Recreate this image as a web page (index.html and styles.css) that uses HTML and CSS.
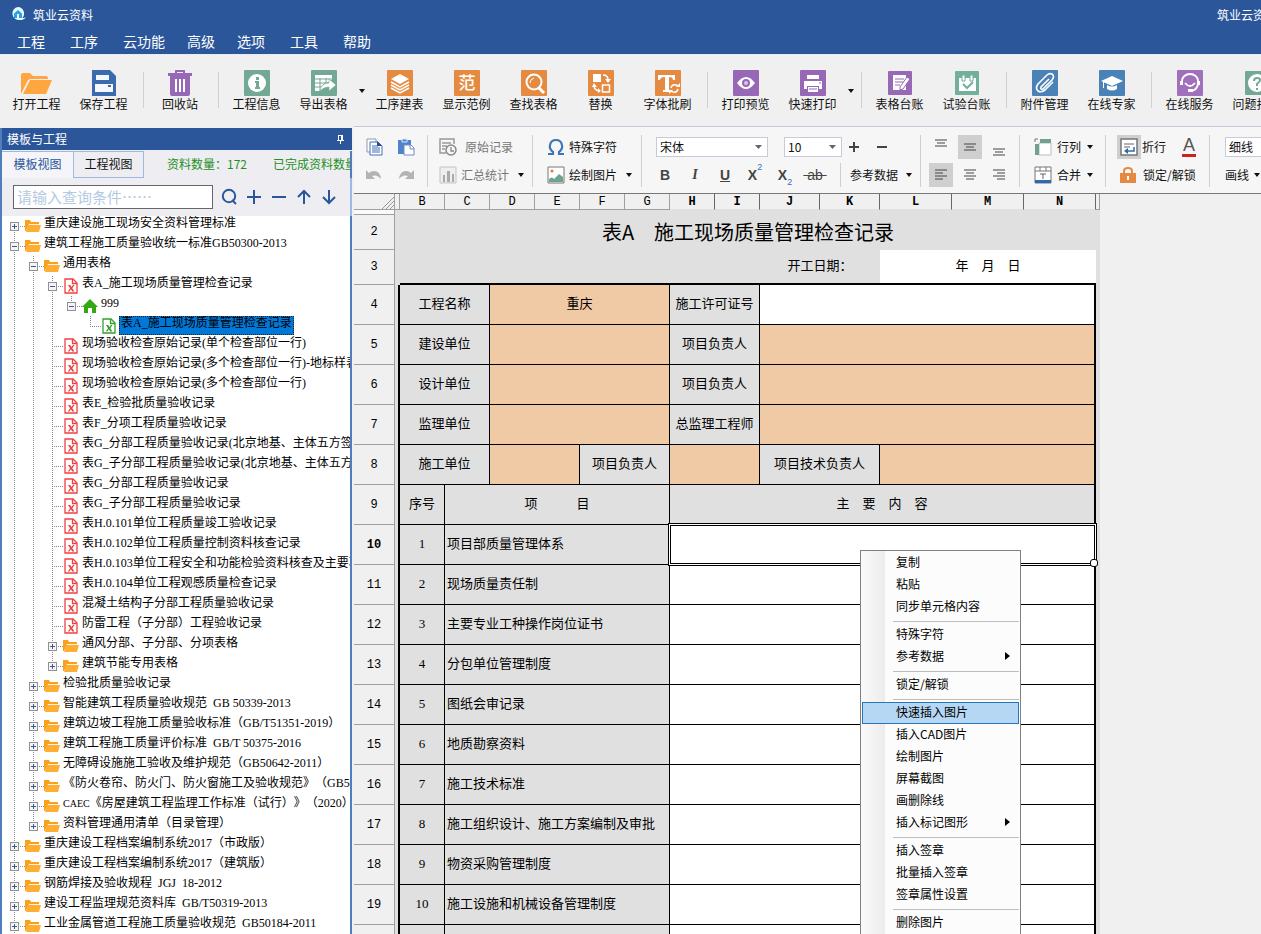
FILE: index.html
```
<!DOCTYPE html>
<html lang="zh-CN">
<head>
<meta charset="UTF-8">
<title>筑业云资料</title>
<link rel="stylesheet" href="styles.css">
</head>
<body>
<svg class="defs" width="0" height="0">
<symbol id="folder" viewBox="0 0 16 14"><path d="M0 12V1h5l1 2h8v2H4L1 12z" fill="#f9a11b"/><path d="M4 5h10v1H4z" fill="#fff3dc"/><path d="M3 6h13l-2 7H1z" fill="#ffae34"/></symbol>
<symbol id="xfile" viewBox="0 0 14 16"><path d="M1 1h8l4 4v10H1z" fill="#fff" stroke="currentColor" stroke-width="1.3"/><path d="M8.500 1v4.500H13" fill="none" stroke="currentColor" stroke-width="1.300"/><path d="M4 7h2.200l1.200 2 1.600-2h1.500L8.300 10.200l2.100 3.300H8.200L6.900 11.300 5.300 13.500H3.800l2.300-3.300z" fill="currentColor"/></symbol>
<symbol id="home" viewBox="0 0 16 16"><path d="M8 1l8 8h-2v6h-4v-5H6v5H2V9H0z" fill="#33a811"/></symbol>
</svg>

<header>
<div class="titlebar">
<svg width="16" height="16" viewBox="0 0 16 16"><path d="M7 0a6.500 6.500 0 1 0 2 13c2 0 4-.5 6-2.500-2 .6-3 .5-3.500.2A6.500 6.500 0 0 0 7 0z" fill="#eafaff"/><path d="M7 3l4 3.500v4.500H3V6.500z" fill="#20a8e4"/><path d="M6 7h2v4H6z" fill="#fff"/></svg>
<span>筑业云资料</span>
<span class="right-title">筑业云资料</span>
</div>
<nav class="menubar">
<button>工程</button><button>工序</button><button>云功能</button><button class="narrow">高级</button><button>选项</button><button>工具</button><button>帮助</button>
</nav>
</header>

<div class="toolbar">
<button class="tool"><svg viewBox="0 0 32 26" class="wide"><path d="M0 24V5q0-2 2-2h7l3 3h13q2 0 2 3H10q-3 0-4 3z" fill="#ffa640"/><path d="M9 10h22L25 24H2z" fill="#ffa640"/></svg>打开工程</button>
<button class="tool"><svg viewBox="0 0 26 26"><path d="M1 0h18l6 6v20H1z" fill="#3d69ae"/><path d="M5 5h13v5H5zM4 14h18v8H4z" fill="#f4f7fc"/><path d="M17 15h3v2h-3z" fill="#3d69ae"/></svg>保存工程</button>
<i class="sep"></i>
<button class="tool small"><svg viewBox="0 0 26 26"><path d="M9 4V1h8v3" fill="none" stroke="#9768b5" stroke-width="2"/><path d="M1 3h24v3H1z" fill="#9768b5"/><path d="M3 6h20v18q0 2-2 2H5q-2 0-2-2z" fill="#9768b5"/><path d="M8 9h2v13H8zM12 9h2v13h-2zM16 9h2v13h-2z" fill="#fff"/></svg>回收站</button>
<i class="sep"></i>
<button class="tool"><svg viewBox="0 0 26 26"><rect width="26" height="26" rx="1" fill="#72a894"/><circle cx="13" cy="13" r="9" fill="#fff"/><path d="M12 7h3v3h-3zM11 11h4v6h1v2h-5v-2h1v-4h-1z" fill="#72a894"/></svg>工程信息</button>
<button class="tool"><svg viewBox="0 0 26 26"><rect width="26" height="26" rx="1" fill="#72a894"/><path d="M4 5h17v5l-3 0v2q-7 0-9 9H4z" fill="#fff"/><path d="M4 9h17M4 13h11M4 17h7M9 8v13M15 8v6" stroke="#72a894"/><path d="M9 21q1-8 9-8v-4l7 6-7 6v-4q-5 0-9 4z" fill="#fff" stroke="#72a894" stroke-width=".6"/></svg>导出表格</button>
<span class="drop"><i class="caret"></i></span>
<button class="tool"><svg viewBox="0 0 26 26"><rect width="26" height="26" rx="1" fill="#e58b41"/><path d="M13 4l9 5-9 5-9-5z" fill="#fff"/><path d="M4 12l9 5 9-5M4 15l9 5 9-5M4 18l9 5 9-5" fill="none" stroke="#fff" stroke-width="1.500"/></svg>工序建表</button>
<button class="tool"><svg viewBox="0 0 26 26"><rect width="26" height="26" rx="1" fill="#e58b41"/><text x="13" y="19" text-anchor="middle" class="icon-word">范</text></svg>显示范例</button>
<button class="tool"><svg viewBox="0 0 26 26"><rect width="26" height="26" rx="1" fill="#e58b41"/><circle cx="13" cy="12" r="7.500" fill="none" stroke="#fff" stroke-width="2"/><path d="M9 13q0-4 4-5" fill="none" stroke="#fff"/><path d="M18 18l5 5" stroke="#fff" stroke-width="3"/></svg>查找表格</button>
<button class="tool"><svg viewBox="0 0 26 26"><rect width="26" height="26" rx="1" fill="#e58b41"/><path d="M5 4h8v8H5z" fill="#fff"/><path d="M14.500 15h7v7h-7zM15 5q5 0 5 5M6 15q0 5 5 6" fill="none" stroke="#fff" stroke-width="1.500"/><path d="M17 9h6l-3 4zM4 17l2-4 3 4zM10 18v5l3-2z" fill="#fff"/></svg>替换</button>
<button class="tool"><svg viewBox="0 0 26 26"><rect width="26" height="26" rx="1" fill="#e58b41"/><path d="M3 5h17v5h-2q0-3-4-3v13h2v2H8v-2h2V7Q5 7 5 10H3z" fill="#fff"/><path d="M16 18q1-4 5-3l2 1M23 19q-1 4-5 3l-2-1" fill="none" stroke="#fff" stroke-width="1.500"/><path d="M21 17h4v-4zM18 20h-4v4z" fill="#fff"/></svg>字体批刷</button>
<i class="sep"></i>
<button class="tool"><svg viewBox="0 0 26 26"><rect width="26" height="26" rx="1" fill="#9768b5"/><path d="M4 13q9-12 18 0-9 12-18 0z" fill="#fff"/><circle cx="13" cy="13" r="4" fill="#9768b5"/><circle cx="13" cy="13" r="2" fill="#d9c6e5"/></svg>打印预览</button>
<button class="tool"><svg viewBox="0 0 26 26"><rect width="26" height="26" rx="1" fill="#9768b5"/><path d="M7 5h12v4H7zM4 11h18v8h-3v-3H7v3H4zM8 17h10v5H8z" fill="#fff"/><path d="M19 13h2M9 19h8" stroke="#9768b5"/></svg>快速打印</button>
<span class="drop"><i class="caret"></i></span>
<i class="sep"></i>
<button class="tool"><svg viewBox="0 0 26 26"><rect x="1" y="1" width="24" height="24" rx="1" fill="#9768b5"/><path d="M6 5h13v15H6z" fill="#fff"/><path d="M8 9h9M8 12h8M8 15h5" stroke="#9768b5"/><path d="M20 7l3 2-7 10-3 1 0-3z" fill="#fff" stroke="#9768b5"/></svg>表格台账</button>
<button class="tool"><svg viewBox="0 0 26 26"><rect x="1" y="1" width="24" height="24" rx="1" fill="#73b09a"/><path d="M5 8h17v13H5z" fill="#fff"/><path d="M8 5h3v6H8zM16 5h3v6h-3z" fill="#fff" stroke="#73b09a"/><path d="M9 14l4 4 6-6" fill="none" stroke="#73b09a" stroke-width="2"/></svg>试验台账</button>
<i class="sep"></i>
<button class="tool"><svg viewBox="0 0 26 26"><rect width="26" height="26" rx="1" fill="#4a82b8"/><path d="M17 9l-8 8q-1 3 2 2l9-9q3-4 0-6-3-1-5 1l-9 9q-3 4 0 7 3 2 7-1l8-8" fill="none" stroke="#fff" stroke-width="1.600"/></svg>附件管理</button>
<button class="tool"><svg viewBox="0 0 26 26"><rect width="26" height="26" rx="1" fill="#4a82b8"/><path d="M13 6l11 5-11 5-11-5z" fill="#fff"/><path d="M8 15q5 3 10 0v4q-5 3-10 0zM4 12h1v6H4z" fill="#fff"/></svg>在线专家</button>
<i class="sep"></i>
<button class="tool"><svg viewBox="0 0 26 26"><rect width="26" height="26" rx="1" fill="#a070bd"/><path d="M5 13V11a8 7 0 0 1 16 0v2q0 6-6 8M8 13q5 6 10 0" fill="none" stroke="#fff" stroke-width="1.800"/><path d="M3 11h3v4H3zM20 11h3v4h-3zM11 19h5v3h-5z" fill="#fff"/></svg>在线服务</button>
<button class="tool"><svg viewBox="0 0 26 26"><rect x="1" y="1" width="24" height="24" rx="1" fill="#72a894"/><circle cx="13" cy="13" r="9" fill="#fff"/><path d="M10 11q0-3 3-3t3 2-3 4v2M13 18v2" fill="none" stroke="#72a894" stroke-width="2"/></svg>问题找答</button>
</div>

<main>
<aside>
<div class="panel-head"><span>模板与工程</span><svg width="9" height="9" viewBox="0 0 9 9"><path d="M2 0h5v5h1v1H5v3H4V6H1V5h1zM3 1v4h2V1z" fill="#fff"/></svg></div>
<div class="tabs">
<button class="tab active">模板视图</button><button class="tab">工程视图</button>
<span class="counts"><span>资料数量：172</span><span>已完成资料数量：1</span></span>
</div>
<div class="search">
<input type="text" placeholder="请输入查询条件……" aria-label="查询条件">
<button aria-label="查询"><svg viewBox="0 0 18 18"><circle cx="9" cy="8" r="6.200"/><path d="M12 12l4 4"/></svg></button>
<button aria-label="展开"><svg viewBox="0 0 18 18"><path d="M2 9h14M9 2v14"/></svg></button>
<button aria-label="收起"><svg viewBox="0 0 18 18"><path d="M2 9h14"/></svg></button>
<button aria-label="上一个"><svg viewBox="0 0 18 18"><path d="M9 3v13M3 9l6-6 6 6"/></svg></button>
<button aria-label="下一个"><svg viewBox="0 0 18 18"><path d="M9 2v13M3 9l6 6 6-6"/></svg></button>
</div>
<ul class="tree">
<li><div class="row"><button class="exp plus"></button><svg><use href="#folder"/></svg><span>重庆建设施工现场安全资料管理标准</span></div></li>
<li><div class="row"><button class="exp"></button><svg><use href="#folder"/></svg><span>建筑工程施工质量验收统一标准GB50300-2013</span></div>
<ul>
<li><div class="row"><button class="exp"></button><svg><use href="#folder"/></svg><span>通用表格</span></div>
<ul>
<li><div class="row"><button class="exp"></button><svg class="red"><use href="#xfile"/></svg><span>表A_施工现场质量管理检查记录</span></div>
<ul>
<li><div class="row"><button class="exp"></button><svg><use href="#home"/></svg><span>999</span></div>
<ul>
<li><div class="row leaf"><svg class="green"><use href="#xfile"/></svg><span class="selected">表A_施工现场质量管理检查记录</span></div></li>
</ul>
</li>
</ul>
</li>
<li><div class="row leaf"><svg class="red"><use href="#xfile"/></svg><span>现场验收检查原始记录(单个检查部位一行)</span></div></li>
<li><div class="row leaf"><svg class="red"><use href="#xfile"/></svg><span>现场验收检查原始记录(多个检查部位一行)-地标样表</span></div></li>
<li><div class="row leaf"><svg class="red"><use href="#xfile"/></svg><span>现场验收检查原始记录(多个检查部位一行)</span></div></li>
<li><div class="row leaf"><svg class="red"><use href="#xfile"/></svg><span>表E_检验批质量验收记录</span></div></li>
<li><div class="row leaf"><svg class="red"><use href="#xfile"/></svg><span>表F_分项工程质量验收记录</span></div></li>
<li><div class="row leaf"><svg class="red"><use href="#xfile"/></svg><span>表G_分部工程质量验收记录(北京地基、主体五方签章)</span></div></li>
<li><div class="row leaf"><svg class="red"><use href="#xfile"/></svg><span>表G_子分部工程质量验收记录(北京地基、主体五方签章)</span></div></li>
<li><div class="row leaf"><svg class="red"><use href="#xfile"/></svg><span>表G_分部工程质量验收记录</span></div></li>
<li><div class="row leaf"><svg class="red"><use href="#xfile"/></svg><span>表G_子分部工程质量验收记录</span></div></li>
<li><div class="row leaf"><svg class="red"><use href="#xfile"/></svg><span>表H.0.101单位工程质量竣工验收记录</span></div></li>
<li><div class="row leaf"><svg class="red"><use href="#xfile"/></svg><span>表H.0.102单位工程质量控制资料核查记录</span></div></li>
<li><div class="row leaf"><svg class="red"><use href="#xfile"/></svg><span>表H.0.103单位工程安全和功能检验资料核查及主要功能</span></div></li>
<li><div class="row leaf"><svg class="red"><use href="#xfile"/></svg><span>表H.0.104单位工程观感质量检查记录</span></div></li>
<li><div class="row leaf"><svg class="red"><use href="#xfile"/></svg><span>混凝土结构子分部工程质量验收记录</span></div></li>
<li><div class="row leaf"><svg class="red"><use href="#xfile"/></svg><span>防雷工程（子分部）工程验收记录</span></div></li>
<li><div class="row"><button class="exp plus"></button><svg><use href="#folder"/></svg><span>通风分部、子分部、分项表格</span></div></li>
<li><div class="row"><button class="exp plus"></button><svg><use href="#folder"/></svg><span>建筑节能专用表格</span></div></li>
</ul>
</li>
<li><div class="row"><button class="exp plus"></button><svg><use href="#folder"/></svg><span>检验批质量验收记录</span></div></li>
<li><div class="row"><button class="exp plus"></button><svg><use href="#folder"/></svg><span>智能建筑工程质量验收规范&ensp;GB 50339-2013</span></div></li>
<li><div class="row"><button class="exp plus"></button><svg><use href="#folder"/></svg><span>建筑边坡工程施工质量验收标准（GB/T51351-2019）</span></div></li>
<li><div class="row"><button class="exp plus"></button><svg><use href="#folder"/></svg><span>建筑工程施工质量评价标准&ensp;GB/T 50375-2016</span></div></li>
<li><div class="row"><button class="exp plus"></button><svg><use href="#folder"/></svg><span>无障碍设施施工验收及维护规范（GB50642-2011）</span></div></li>
<li><div class="row"><button class="exp plus"></button><svg><use href="#folder"/></svg><span>《防火卷帘、防火门、防火窗施工及验收规范》（GB50877）</span></div></li>
<li><div class="row"><button class="exp plus"></button><svg><use href="#folder"/></svg><span><small>CAEC</small>《房屋建筑工程监理工作标准（试行）》（2020）</span></div></li>
<li><div class="row"><button class="exp plus"></button><svg><use href="#folder"/></svg><span>资料管理通用清单（目录管理）</span></div></li>
</ul>
</li>
<li><div class="row"><button class="exp plus"></button><svg><use href="#folder"/></svg><span>重庆建设工程档案编制系统2017（市政版）</span></div></li>
<li><div class="row"><button class="exp plus"></button><svg><use href="#folder"/></svg><span>重庆建设工程档案编制系统2017（建筑版）</span></div></li>
<li><div class="row"><button class="exp plus"></button><svg><use href="#folder"/></svg><span>钢筋焊接及验收规程&ensp;JGJ&ensp;18-2012</span></div></li>
<li><div class="row"><button class="exp plus"></button><svg><use href="#folder"/></svg><span>建设工程监理规范资料库&ensp;GB/T50319-2013</span></div></li>
<li><div class="row"><button class="exp plus"></button><svg><use href="#folder"/></svg><span>工业金属管道工程施工质量验收规范&ensp;GB50184-2011</span></div></li>
</ul>
</aside>

<section class="work">
<div class="ribbon">
<div class="group clip">
<div class="line">
<button aria-label="复制"><svg viewBox="0 0 18 18"><path d="M2 1h9v13H2z" fill="#fff" stroke="#8a9bb5"/><path d="M5 4h8l4 4v9H5z" fill="#fff" stroke="#3c6eb4"/><path d="M7 8h6M7 10h8M7 12h8M7 14h8" stroke="#3c6eb4"/><path d="M12 3l5 5h-5z" fill="#1f4e96"/></svg></button>
<button aria-label="粘贴"><svg viewBox="0 0 18 18"><path d="M1 2h13v14H1z" fill="#4f83cc"/><path d="M5 1h5v3H5z" fill="#4f83cc" stroke="#dfe8f5"/><path d="M7 7h7l3 3v7H7z" fill="#fff" stroke="#6f8fbf"/><path d="M13 7v4h4" fill="none" stroke="#6f8fbf"/></svg></button>
</div>
<div class="line">
<button aria-label="撤销"><svg viewBox="0 0 18 18"><path d="M1 4v9h9l-3-3q5-2 9 3Q15 5 9 5 6 5 4 7z" fill="#b3b3b3"/></svg></button>
<button aria-label="重做"><svg viewBox="0 0 18 18"><path d="M17 4v9H8l3-3q-5-2-9 3 1-8 7-8 3 0 5 2z" fill="#b3b3b3"/></svg></button>
</div>
</div>
<div class="group records">
<div class="line"><button class="off"><svg viewBox="0 0 18 18"><path d="M15 6V1H1v14h6" fill="none" stroke="#999" stroke-width="1.500"/><path d="M3 5h9M3 8h5M3 11h3" stroke="#999" stroke-width="1.500"/><circle cx="12" cy="12" r="5" fill="#f6f6f6" stroke="#888" stroke-width="1.500"/><path d="M12 9v4h3" fill="none" stroke="#888" stroke-width="1.300"/></svg><span class="gap">原始记录</span></button></div>
<div class="line"><button class="off"><svg viewBox="0 0 18 18"><path d="M1 1h16v16H1z" fill="#eee" stroke="#c4c4c4"/><path d="M4 9h2v7H4zM8 5h3v11H8zM13 8h2v8h-2z" fill="#aaa"/></svg>汇总统计<i class="caret"></i></button></div>
</div>
<div class="group symbols">
<div class="line"><button><svg viewBox="0 0 18 18"><path d="M1 16h5v-2q-4-3-3-7 1-5 6-5t6 5q1 4-3 7v2h5" fill="none" stroke="#3b77b8" stroke-width="2.200"/></svg>特殊字符</button></div>
<div class="line"><button><svg viewBox="0 0 18 18"><path d="M1 1h16v16H1z" fill="#fff" stroke="#777"/><circle cx="5" cy="5" r="1.500" fill="#e77a2b"/><path d="M2 16v-3q3-3 5 0l5-5 4 3v5z" fill="#6da391"/></svg>绘制图片<i class="caret"></i></button></div>
</div>
<div class="group fonts">
<div class="line">
<select class="face" aria-label="字体"><option>宋体</option></select>
<select class="size" aria-label="字号"><option>10</option></select>
<button class="step" aria-label="增大"><svg viewBox="0 0 18 18"><path d="M4 9h10M9 4v10" stroke="#444" stroke-width="2"/></svg></button>
<button class="step" aria-label="减小"><svg viewBox="0 0 18 18"><path d="M4 9h10" stroke="#444" stroke-width="2"/></svg></button>
</div>
<div class="line">
<button class="fmt"><b>B</b></button><button class="fmt"><em>I</em></button><button class="fmt"><u>U</u></button><button class="fmt">X<sup>2</sup></button><button class="fmt">X<sub>2</sub></button><button class="fmt strike"><s>&nbsp;ab&nbsp;</s></button>
<button class="refdata">参考数据<i class="caret"></i></button>
</div>
</div>
<div class="group aligns">
<div class="line">
<button aria-label="顶端对齐"><svg viewBox="0 0 18 18"><path d="M3 2h12M5 5h8M3 8h12"/></svg></button>
<button class="on" aria-label="垂直居中"><svg viewBox="0 0 18 18"><path d="M3 6h12M5 9h8M3 12h12"/></svg></button>
<button aria-label="底端对齐"><svg viewBox="0 0 18 18"><path d="M3 11h12M5 14h8M3 17h12"/></svg></button>
</div>
<div class="line">
<button class="on" aria-label="左对齐"><svg viewBox="0 0 18 18"><path d="M3 4h12M3 7h8M3 10h12M3 13h8"/></svg></button>
<button aria-label="居中"><svg viewBox="0 0 18 18"><path d="M3 4h12M5 7h8M3 10h12M5 13h8"/></svg></button>
<button aria-label="右对齐"><svg viewBox="0 0 18 18"><path d="M3 4h12M7 7h8M3 10h12M7 13h8"/></svg></button>
</div>
</div>
<div class="group cells">
<div class="line"><button><svg viewBox="0 0 18 18"><path d="M5 5h12v12H5z" fill="#fff" stroke="#bbb"/><path d="M6 1h11v4H6zM1 6h4v11H1z" fill="#6da391"/><path d="M1 4V1h3" fill="none" stroke="#777"/></svg>行列<i class="caret"></i></button></div>
<div class="line"><button><svg viewBox="0 0 18 18"><path d="M1 1h16v16H1zM1 5h16M6 1v4M12 1v4" fill="#fff" stroke="#777"/><path d="M6 8h6M9 8v5" stroke="#666"/><path d="M1 14h16v3H1z" fill="#2f69b0"/></svg>合并<i class="caret"></i></button></div>
</div>
<div class="group wraps">
<div class="line"><button><span class="on box"><svg viewBox="0 0 18 18"><path d="M1 1h16v16H1z" fill="#fff" stroke="#777" stroke-width="1.500"/><path d="M4 6h10M4 9h6" stroke="#666"/><path d="M14 9v4H6" fill="none" stroke="#2f69b0" stroke-width="1.500"/><path d="M8 10v6l-4-3z" fill="#2f69b0"/></svg></span>折行</button><button class="color" aria-label="字体颜色">A</button></div>
<div class="line lock"><button><svg viewBox="0 0 18 18"><path d="M5 8V5q0-3 4-3t4 3v3" fill="none" stroke="#e58b41" stroke-width="2"/><path d="M1 7h16v10H1z" fill="#e58b41"/><path d="M8 10h2v4H8z" fill="#fff"/></svg><span>锁定/解锁</span></button></div>
</div>
<div class="group borders">
<div class="line"><select aria-label="线型"><option>细线</option></select></div>
<div class="line"><button>画线<i class="caret"></i></button></div>
</div>
</div>

<div class="sheet">
<table>
<colgroup><col class="c-head"><col class="c-a"><col span="8" class="c-s"><col span="2" class="c-m"><col span="3" class="c-l"><col class="c-end"></colgroup>
<tr class="heads"><th><svg width="12" height="12" viewBox="0 0 12 12"><path d="M0 12L12 0M4 12l8-8M8 12l4-4" stroke="#999"/></svg></th><th></th><th>B</th><th>C</th><th>D</th><th>E</th><th>F</th><th>G</th><th class="cur">H</th><th class="cur">I</th><th class="cur">J</th><th class="cur">K</th><th class="cur">L</th><th class="cur">M</th><th class="cur">N</th><th></th></tr>
<tr class="r1"><th></th><td class="none" colspan="15"></td></tr>
<tr class="r2"><th>2</th><td class="none"></td><td class="none title" colspan="13">表A　施工现场质量管理检查记录</td><td class="none"></td></tr>
<tr class="r3"><th>3</th><td class="none"></td><td class="top" colspan="8"></td><td class="top" colspan="2">开工日期：</td><td class="top val" colspan="3">年　月　日</td><td class="none"></td></tr>
<tr><th>4</th><td class="edge"></td><td colspan="2">工程名称</td><td class="fill" colspan="4">重庆</td><td colspan="2">施工许可证号</td><td class="val last" colspan="5"></td><td class="none"></td></tr>
<tr><th>5</th><td class="edge"></td><td colspan="2">建设单位</td><td class="fill" colspan="4"></td><td colspan="2">项目负责人</td><td class="fill last" colspan="5"></td><td class="none"></td></tr>
<tr><th>6</th><td class="edge"></td><td colspan="2">设计单位</td><td class="fill" colspan="4"></td><td colspan="2">项目负责人</td><td class="fill last" colspan="5"></td><td class="none"></td></tr>
<tr><th>7</th><td class="edge"></td><td colspan="2">监理单位</td><td class="fill" colspan="4"></td><td colspan="2">总监理工程师</td><td class="fill last" colspan="5"></td><td class="none"></td></tr>
<tr><th>8</th><td class="edge"></td><td colspan="2">施工单位</td><td class="fill" colspan="2"></td><td colspan="2">项目负责人</td><td class="fill" colspan="2"></td><td colspan="2">项目技术负责人</td><td class="fill last" colspan="3"></td><td class="none"></td></tr>
<tr><th>9</th><td class="edge"></td><td>序号</td><td colspan="5">项　　　目</td><td class="last" colspan="7">主　要　内　容</td><td class="none"></td></tr>
<tr><th class="cur">10</th><td class="edge"></td><td>1</td><td class="item" colspan="5">项目部质量管理体系</td><td class="val last active-cell" colspan="7"></td><td class="none"></td></tr>
<tr><th>11</th><td class="edge"></td><td>2</td><td class="item" colspan="5">现场质量责任制</td><td class="val last" colspan="7"></td><td class="none"></td></tr>
<tr><th>12</th><td class="edge"></td><td>3</td><td class="item" colspan="5">主要专业工种操作岗位证书</td><td class="val last" colspan="7"></td><td class="none"></td></tr>
<tr><th>13</th><td class="edge"></td><td>4</td><td class="item" colspan="5">分包单位管理制度</td><td class="val last" colspan="7"></td><td class="none"></td></tr>
<tr><th>14</th><td class="edge"></td><td>5</td><td class="item" colspan="5">图纸会审记录</td><td class="val last" colspan="7"></td><td class="none"></td></tr>
<tr><th>15</th><td class="edge"></td><td>6</td><td class="item" colspan="5">地质勘察资料</td><td class="val last" colspan="7"></td><td class="none"></td></tr>
<tr><th>16</th><td class="edge"></td><td>7</td><td class="item" colspan="5">施工技术标准</td><td class="val last" colspan="7"></td><td class="none"></td></tr>
<tr><th>17</th><td class="edge"></td><td>8</td><td class="item" colspan="5">施工组织设计、施工方案编制及审批</td><td class="val last" colspan="7"></td><td class="none"></td></tr>
<tr><th>18</th><td class="edge"></td><td>9</td><td class="item" colspan="5">物资采购管理制度</td><td class="val last" colspan="7"></td><td class="none"></td></tr>
<tr><th>19</th><td class="edge"></td><td>10</td><td class="item" colspan="5">施工设施和机械设备管理制度</td><td class="val last" colspan="7"></td><td class="none"></td></tr>
<tr><th></th><td class="edge"></td><td></td><td class="item" colspan="5"></td><td class="val last" colspan="7"></td><td class="none"></td></tr>
</table>
</div>
</section>
</main>

<div class="context-menu">
<button>复制</button>
<button>粘贴</button>
<button>同步单元格内容</button>
<hr>
<button>特殊字符</button>
<button class="more">参考数据</button>
<hr>
<button>锁定/解锁</button>
<hr>
<button class="hot">快速插入图片</button>
<button>插入CAD图片</button>
<button>绘制图片</button>
<button>屏幕截图</button>
<button>画删除线</button>
<button class="more">插入标记图形</button>
<hr>
<button>插入签章</button>
<button>批量插入签章</button>
<button>签章属性设置</button>
<hr>
<button>删除图片</button>
</div>
</body>
</html>
```
FILE: styles.css
```
*{box-sizing:border-box;}
body{margin:0;height:100vh;overflow:hidden;position:relative;display:flex;flex-direction:column;
font-family:"Noto Sans CJK SC",sans-serif;font-size:12px;line-height:16px;color:#111;background:#f0f0f0;
white-space:nowrap;text-spacing-trim:space-all;}
button{font:inherit;color:inherit;background:none;border:0;padding:0;margin:0;white-space:nowrap;}
.defs{position:absolute;}
.caret{display:inline-block;flex:none;width:0;height:0;border:3px solid transparent;border-top:4px solid #111;border-bottom:0;}

/* header */
header{flex:none;height:54px;background:#2b579a;color:#fff;overflow:hidden;}
.titlebar{display:flex;align-items:center;height:29px;padding-left:11px;gap:6px;}
.right-title{margin-left:auto;flex:0 0 44px;min-width:0;}
.menubar{display:flex;gap:25px;padding-left:17px;height:24px;align-items:center;font-size:14px;}
.menubar .narrow{margin:0 -3px;}

/* main toolbar */
.toolbar{flex:none;display:flex;height:72px;padding:15px 0 0 3px;border-top:1px solid #e3edf8;overflow:hidden;}
.tool{flex:none;width:67px;height:44px;display:flex;flex-direction:column;align-items:center;}
.tool.small{width:64px;}
.tool svg{width:26px;height:26px;flex:none;}
.tool svg.wide{width:32px;}
.icon-word{font-size:17px;font-weight:500;fill:#fff;}
.drop{flex:none;width:9px;padding-top:10px;text-align:center;}
.sep{flex:none;width:1px;height:36px;margin:2px 4px 0 6px;background:#d0d0d0;}

main{flex:1;display:flex;min-height:0;}

/* left panel */
aside{flex:none;width:352px;margin-top:2px;border-left:2px solid #4f7dbd;display:flex;flex-direction:column;overflow:hidden;}
.panel-head{flex:none;display:flex;align-items:center;justify-content:space-between;height:22px;padding:0 7px 0 5px;
background:#2b579a;color:#fff;}
.tabs{flex:none;display:flex;height:28px;padding-top:1px;overflow:hidden;background:#eeeef2;}
.tab{flex:none;width:70px;border:1px solid #9bb9e3;border-left:0;padding-bottom:2px;}
.tab.active{width:72px;border-bottom:0;color:#2b579a;background:#f5f5f9;}
.counts{flex:1;display:flex;gap:26px;padding:5px 0 0 23px;color:#1f8f1f;border-right:2px solid #4f7dbd;overflow:hidden;}
.search{flex:none;display:flex;align-items:center;height:38px;padding-left:11px;background:#eeeef2;gap:7px;border-right:2px solid #9bb9e3;}
.search input{width:200px;height:24px;border:1px solid #666;background:#fff;padding:0 3px 2px;font:15px/18px "Noto Sans CJK SC",sans-serif;}
.search input::placeholder{color:#b4cae2;}
.search svg{display:block;width:18px;height:18px;fill:none;stroke:#2b579a;stroke-width:2;}

.tree{flex:1;border-right:2px solid #4f7dbd;overflow:hidden;background-color:#fff;
font-family:"Liberation Serif","Noto Sans CJK SC",serif;color:#000;}
.tree,.tree ul{list-style:none;margin:0;padding:0;
background-image:linear-gradient(#888 1px,transparent 1px);background-size:1px 2px;background-position:12px 0;background-repeat:repeat-y;}
.tree ul{margin-left:19px;}
.tree>li:first-child{background:linear-gradient(#fff,#fff) 0 0 / 20px 10px no-repeat;}
.tree ul>li:last-child{background:linear-gradient(#fff,#fff) 0 11px / 14px 100% no-repeat;}
.row{display:flex;height:20px;padding-left:8px;
background:repeating-linear-gradient(90deg,#888 0 1px,transparent 1px 2px) 12px 10px / 11px 1px no-repeat;}
.row.leaf{padding-left:23px;}
.row svg{flex:none;width:16px;height:16px;margin:2px 3px 0 0;}
.row span{height:19px;line-height:14px;}
.row small{font-size:10px;}
.red{color:#ef4040;}
.green{color:#33a02c;}
.row .selected{background:#0078d7;border:1px dotted #222;padding:0 1px;margin-left:-1px;line-height:12px;}
.exp{flex:none;width:9px;height:9px;margin:6px 6px 0 0;border:1px solid #919191;
background:linear-gradient(#3b5a94,#3b5a94) 1px 3px / 5px 1px no-repeat #f4f4f4;}
.exp.plus{background:linear-gradient(#3b5a94,#3b5a94) 1px 3px / 5px 1px no-repeat,linear-gradient(#3b5a94,#3b5a94) 3px 1px / 1px 5px no-repeat #f4f4f4;}

/* ribbon */
.work{flex:1;min-width:0;margin-left:2px;display:flex;flex-direction:column;}
.ribbon{flex:none;display:flex;height:68px;padding-top:8px;border-top:1px solid #c8c8d8;border-bottom:1px solid #777;background:#f6f6f6;overflow:hidden;}
.group{flex:none;height:52px;display:grid;grid-template-rows:24px 24px;row-gap:4px;border-right:1px solid #d0d0d0;}
.line,.line button{display:flex;align-items:center;}
.ribbon svg{flex:none;width:18px;height:18px;}
.line .caret{margin-left:8px;}
.clip{padding:0 12px 0 11px;}
.clip .line{gap:14px;}
.records{padding:0 8px 0 11px;}
.records button,.symbols button{gap:4px;}
.records .caret,.symbols .caret{margin-left:5px;}
.records .gap{margin-left:4px;}
.off{color:#777;}
.symbols{padding:0 9px 0 14px;}
select{appearance:none;height:20px;border:1px solid #c6cbda;border-radius:0;padding:0 3px;font:inherit;color:#111;
background:#fff url("data:image/svg+xml,%3Csvg xmlns='http://www.w3.org/2000/svg' width='8' height='5'%3E%3Cpath d='M0 0h7L3.500 4z' fill='%23666'/%3E%3C/svg%3E") right 4px center no-repeat;}
.fonts{padding:0 8px 0 14px;}
.face{width:112px;margin-right:16px;}
.size{width:58px;margin-right:3px;}
.step{margin-right:10px;}
.line .fmt{width:30px;height:24px;justify-content:center;font:700 14px/20px "Liberation Sans",sans-serif;color:#444;}
.line .fmt:first-child{margin-left:-6px;}
.fmt em{font-family:"Liberation Serif",serif;}
.fmt sup,.fmt sub{font-size:9px;font-weight:400;line-height:9px;color:#3c6eb4;}
.fmt sup{align-self:flex-start;}
.fmt sub{align-self:flex-end;}
.line .strike{font-weight:400;margin-right:10px;}
.refdata{height:24px;padding-left:9px;border-left:1px solid #d0d0d0;}
.aligns{padding:0 8px;}
.aligns .line{gap:5px;}
.aligns button{width:24px;height:24px;justify-content:center;}
.aligns path{stroke:#444;fill:none;}
.on{background:#cfcfcf;}
.cells{padding:0 12px 0 14px;}
.cells button{gap:5px;}
.cells .caret{margin-left:1px;}
.wraps{padding:0 13px 0 11px;}
.box{width:24px;height:24px;padding:3px;margin-right:1px;display:block;}
.wraps .line .color{display:block;margin-left:16px;width:14px;font:18px/17px "Liberation Sans",sans-serif;color:#555;border-bottom:3px solid #c22;}
.lock button{gap:6px;padding-left:2px;}
.borders{border:0;padding-left:15px;}
.borders select{width:80px;}
.borders .caret{margin-left:5px;}

/* sheet */
.sheet{flex:1;min-height:0;overflow:hidden;background:#f0f0f0;}
table{table-layout:fixed;width:746px;border-spacing:0;background:#e0e0e0;
font:13px/16px "Liberation Serif","Noto Sans CJK SC",serif;color:#000;}
.c-head{width:41px;}
.c-a{width:5px;}
.c-s{width:45px;}
.c-m{width:60px;}
.c-l{width:72px;}
.c-end{width:4px;}
tr{height:40px;}
th,td{padding:0;text-align:center;overflow:hidden;}
th{font:400 12px/14px "Liberation Mono",monospace;background:#f0f0f0;border-right:1px solid #a0a0a0;border-bottom:1px solid #a0a0a0;}
th.cur{font-weight:700;}
th svg{display:block;margin:2px 0 0 auto;}
.heads{height:16px;}
.heads .cur{border-right-color:#666;border-bottom-color:#e0e0e0;}
.r1{height:5px;line-height:0;}
.r1 th{background:#fafafa;}
.r2,.r3{height:35px;}
td{background:#e0e0e0;border-right:1px solid #000;border-bottom:1px solid #000;padding-bottom:2px;}
.none{border:0;}
.r1 td{padding:0;}
.title{font:20px/24px "Noto Sans CJK SC",sans-serif;}
.top{border-right:0;border-bottom:2px solid #000;}
.edge{border-right:2px solid #000;border-bottom:0;}
.last{border-right-width:2px;}
.fill{background:#f0c9a5;}
.val{background:#fff;}
.item{text-align:left;padding-left:2px;}
.active-cell{position:relative;overflow:visible;}
.active-cell::before{content:"";position:absolute;top:-2px;left:-2px;right:-3px;bottom:-2px;border:3px double #000;background:#fff;}
.active-cell::after{content:"";position:absolute;right:-4px;bottom:-3px;width:6px;height:6px;border:1px solid #000;border-radius:3px;background:#fff;}

/* popup over the sheet */
.context-menu{position:absolute;left:860px;top:550px;width:161px;padding:1px;border:1px solid #808080;z-index:2;color:#000;
background:linear-gradient(90deg,#fafafa,#ececec 24px,#fcfcfc 24px);}
.context-menu button{display:block;width:100%;height:22px;padding:0 0 2px 33px;border:1px solid transparent;text-align:left;line-height:18px;}
.context-menu hr{height:1px;margin:3px 0 2px 31px;border:0;background:#bdbdbd;}
.context-menu .hot{background:#b5d7f4;border-color:#2677c0;}
.context-menu .more{display:flex;align-items:center;justify-content:space-between;padding-right:8px;}
.more::after{content:"";border:4px solid transparent;border-left:5px solid #000;border-right:0;}
```
